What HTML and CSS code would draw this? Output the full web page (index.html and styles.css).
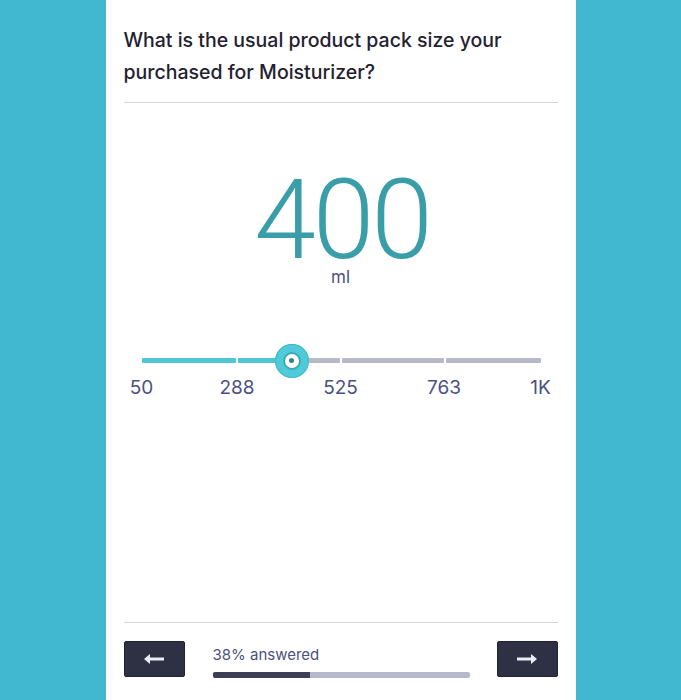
FILE: index.html
```html
<!DOCTYPE html>
<html lang="en">
<head>
<meta charset="utf-8">
<title>Survey question</title>
<link rel="stylesheet" href="styles.css">
</head>
<body>
<main class="panel">
  <header class="question">
    <h1 class="question-title">What is the usual product pack size your purchased for Moisturizer?</h1>
  </header>
  <section class="answer">
    <div class="value">
      <div class="value-num">400</div>
      <div class="value-unit">ml</div>
    </div>
    <div class="slider">
      <div class="track">
        <div class="seg seg-on"></div>
        <div class="seg" style="background: linear-gradient(to right, #4fc6d6 53%, #b6b9c9 53%);"></div>
        <div class="seg"></div>
        <div class="seg"></div>
        <div class="thumb" style="left: 150px;"><span class="thumb-inner"><span class="thumb-dot"></span></span></div>
      </div>
      <div class="labels">
        <span class="lab">50</span>
        <span class="lab">288</span>
        <span class="lab">525</span>
        <span class="lab">763</span>
        <span class="lab">1K</span>
      </div>
    </div>
  </section>
  <footer class="footer">
    <button class="nav-btn" aria-label="Previous">
      <svg width="22" height="12" viewBox="0 0 22 12"><path d="M1 6 L7 1 L7 4.6 L21 4.6 L21 7.4 L7 7.4 L7 11 Z" fill="#e9edf6"/></svg>
    </button>
    <div class="progress">
      <div class="progress-text">38% answered</div>
      <div class="progress-bar"><div class="progress-fill" style="width: 38%;"></div></div>
    </div>
    <button class="nav-btn" aria-label="Next">
      <svg width="22" height="12" viewBox="0 0 22 12"><path d="M21 6 L15 1 L15 4.6 L1 4.6 L1 7.4 L15 7.4 L15 11 Z" fill="#e9edf6"/></svg>
    </button>
  </footer>
</main>
</body>
</html>
```
FILE: styles.css
```css
html, body {
  margin: 0;
  padding: 0;
  height: 100%;
}
body {
  background: #41b7d0;
  font-family: Inter, "Noto Sans", sans-serif;
  display: flex;
  justify-content: center;
}
.panel {
  width: 470px;
  height: 700px;
  background: #ffffff;
  box-sizing: border-box;
  padding: 0 18px;
  display: flex;
  flex-direction: column;
}
.question {
  padding-top: 24px;
  padding-bottom: 14px;
  border-bottom: 1px solid #d4d4d8;
}
.question-title {
  margin: 0;
  font-size: 19.5px;
  line-height: 32px;
  font-weight: 500;
  color: #1f2230;
}
.answer {
  flex: 1;
  display: flex;
  flex-direction: column;
}
.value {
  margin-top: 74px;
  display: flex;
  flex-direction: column;
  align-items: center;
}
.value-num {
  font-family: Roboto, sans-serif;
  font-weight: 300;
  font-size: 111px;
  line-height: 86px;
  letter-spacing: -3px;
  margin-right: -3px;
  margin-bottom: 4px;
  color: #3a9ea8;
}
.value-unit {
  font-size: 17px;
  line-height: 20px;
  color: #4b5182;
}
.slider {
  margin: 71px 17px 0 18px;
}
.track {
  position: relative;
  display: grid;
  grid-template-columns: 94fr 102fr 102fr 95fr;
  column-gap: 2px;
  height: 5px;
}
.seg {
  background: #b6b9c9;
  border-radius: 1px;
}
.seg-on {
  background: #4fc6d6;
}
.thumb {
  position: absolute;
  top: 50%;
  width: 34px;
  height: 34px;
  margin: -17px 0 0 -17px;
  border-radius: 50%;
  background: #4ecad9;
  box-shadow: inset 0 0 0 1px #43b8c7;
  display: flex;
  align-items: center;
  justify-content: center;
}
.thumb-inner {
  width: 14px;
  height: 14px;
  border-radius: 50%;
  background: #ffffff;
  border: 2px solid #3fa9b5;
  display: flex;
  align-items: center;
  justify-content: center;
}
.thumb-dot {
  width: 5px;
  height: 5px;
  border-radius: 50%;
  background: #2b8691;
}
.labels {
  display: grid;
  grid-template-columns: 94fr 102fr 102fr 95fr 0;
  margin-top: 14px;
}
.lab {
  width: 0;
  display: flex;
  justify-content: center;
  white-space: nowrap;
  font-size: 19px;
  line-height: 22px;
  color: #4b5182;
}
.footer {
  border-top: 1px solid #d4d4d8;
  padding: 18px 0 22px;
  display: flex;
  align-items: flex-start;
}
.nav-btn {
  width: 61px;
  height: 36px;
  border: 1px solid #1f2233;
  border-radius: 2px;
  background: #2e3144;
  padding: 0;
  display: flex;
  align-items: center;
  justify-content: center;
  cursor: pointer;
}
.progress {
  flex: 1;
  padding: 5px 27px 0 28px;
}
.progress-text {
  font-size: 15px;
  line-height: 18px;
  color: #4b5182;
}
.progress-bar {
  margin-top: 8px;
  height: 6px;
  border-radius: 2px;
  background: #b6b9c9;
  overflow: hidden;
}
.progress-fill {
  height: 100%;
  background: #3c3f55;
}
```
